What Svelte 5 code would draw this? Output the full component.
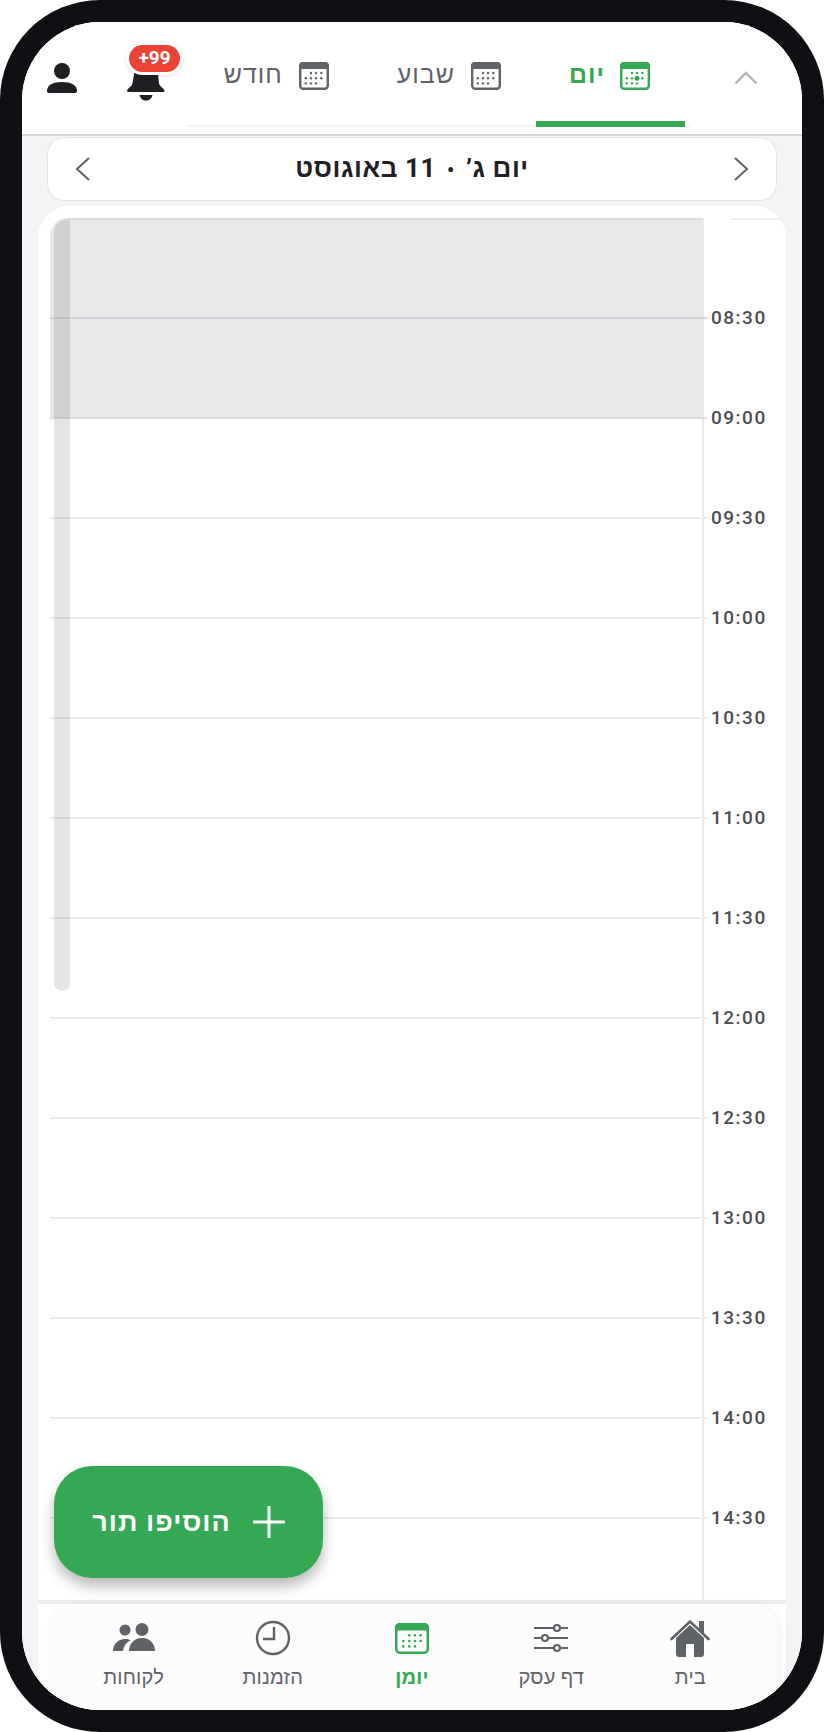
<script>
  const times = ['08:30','09:00','09:30','10:00','10:30','11:00','11:30','12:00','12:30','13:00','13:30','14:00','14:30'];
  const tabs = [
    { label: 'יום', active: true },
    { label: 'שבוע', active: false },
    { label: 'חודש', active: false }
  ];
  const calDots = [
    [12, 11], [17, 11], [22.3, 11],
    [6.8, 16.3], [12, 16.3], [17, 16.3], [22.3, 16.3],
    [6.8, 21.4], [12, 21.4], [17, 21.4]
  ];
  const navDots = [
    [14.3, 12.3], [20, 12.3], [25.7, 12.3],
    [8.3, 18], [14.3, 18], [20, 18], [25.7, 18],
    [8.3, 23.4], [14.3, 23.4], [20, 23.4]
  ];
</script>

{#snippet calendar(color, focus)}
  <svg class="cal" viewBox="0 0 30 28" width="30" height="28" aria-hidden="true">
    <rect x="1.200" y="1.200" width="27.600" height="25.600" rx="3" fill="#fff" stroke={color} stroke-width="2.400" />
    <path d="M0 7V4a4 4 0 0 1 4-4h22a4 4 0 0 1 4 4v3z" fill={color} />
    {#each calDots as [x, y]}
      <circle cx={x} cy={y} r="1.200" fill={color} />
    {/each}
    {#if focus}
      <circle cx="17" cy="16.300" r="2.500" fill={color} />
    {/if}
  </svg>
{/snippet}

<div class="frame">
  <div class="screen" dir="rtl">
    <header class="header">
      <button class="collapse" aria-label="collapse">
        <svg viewBox="0 0 24 14" width="24" height="14"><path d="M1.500 12.500 12 2l10.500 10.500" fill="none" stroke="#b4b4b6" stroke-width="2.400" /></svg>
      </button>
      <nav class="tabs">
        {#each tabs as tab}
          <div class="tab" class:active={tab.active}>
            {@render calendar(tab.active ? '#34a853' : '#5f6368', tab.active)}
            <span>{tab.label}</span>
          </div>
        {/each}
      </nav>
      <div class="bell">
        <svg viewBox="0 0 38 40" width="38" height="40" aria-hidden="true">
          <path d="M12 2h14c3 0 4 3 4.500 6l1.500 14c.3 3 3 4 5 6.500.8 1.200.3 2.500-1.200 2.500H1.700C.2 31-.3 29.700.5 28.500c2-2.500 4.700-3.500 5-6.500L8 8c.5-3 1-6 4-6z" fill="#1f2024" />
          <path d="M12.500 34h13c-.6 3.500-3.200 5.500-6.500 5.500s-5.900-2-6.500-5.500z" fill="#1f2024" />
        </svg>
        <span class="badge" dir="ltr">+99</span>
      </div>
      <div class="person">
        <svg viewBox="0 0 30 30" width="30" height="30" aria-hidden="true">
          <circle cx="15" cy="8" r="8" fill="#1f2024" />
          <path d="M0 28c0-6 6-9 15-9s15 3 15 9c0 1.200-.6 2-2 2H2c-1.400 0-2-.8-2-2z" fill="#1f2024" />
        </svg>
      </div>
    </header>

    <div class="body">
      <div class="datebar">
        <svg viewBox="0 0 16 26" width="16" height="26" aria-hidden="true"><path d="M2 2l12 11L2 24" fill="none" stroke="#5f6368" stroke-width="2" /></svg>
        <h1>יום ג’<span class="dot">•</span>11 באוגוסט</h1>
        <svg viewBox="0 0 16 26" width="16" height="26" aria-hidden="true"><path d="M14 2L2 13l12 11" fill="none" stroke="#5f6368" stroke-width="2" /></svg>
      </div>

      <section class="card">
        <div class="sheet">
          <div class="times">
            {#each times as t}
              <div class="time">{t}</div>
            {/each}
          </div>
          <div class="grid">
            {#each times as t, i}
              <div class="row" class:closed={i < 2}></div>
            {/each}
            <div class="scroll"></div>
          </div>
        </div>
      </section>

      <div class="navwrap">
        <nav class="bottom">
          <div class="item">
            <div class="ic">
              <svg viewBox="0 0 40 38" width="40" height="38" aria-hidden="true">
                <path d="M6 19 20 6l14 13v16a3 3 0 0 1-3 3h-7V25h-8v13H9a3 3 0 0 1-3-3z" fill="#5f6368" />
                <path d="M1.500 20 20 2.500 38.500 20" fill="none" stroke="#5f6368" stroke-width="2.600" stroke-linecap="round" />
                <path d="M29 2h5v13l-5-5z" fill="#5f6368" />
              </svg>
            </div>
            <span>בית</span>
          </div>
          <div class="item">
            <div class="ic">
              <svg viewBox="0 0 34 30" width="34" height="30" aria-hidden="true">
                <g stroke="#5f6368" stroke-width="2.200" fill="#fcfcfc">
                  <path d="M0 5h34M0 15h34M0 25h34" />
                  <circle cx="23" cy="5" r="3" />
                  <circle cx="11" cy="15" r="3" />
                  <circle cx="23" cy="25" r="3" />
                </g>
              </svg>
            </div>
            <span>דף עסק</span>
          </div>
          <div class="item active">
            <div class="ic">
              <svg viewBox="0 0 34 31" width="34" height="31" aria-hidden="true">
                <rect x="1.250" y="1.250" width="31.500" height="28.500" rx="3.500" fill="#fff" stroke="#34a853" stroke-width="2.500" />
                <path d="M0 7.500V4.500a4.500 4.500 0 0 1 4.500-4.500h25a4.500 4.500 0 0 1 4.500 4.500v3z" fill="#34a853" />
                {#each navDots as [x, y]}
                  <circle cx={x} cy={y} r="1.300" fill="#34a853" />
                {/each}
              </svg>
            </div>
            <span>יומן</span>
          </div>
          <div class="item">
            <div class="ic">
              <svg viewBox="0 0 36 36" width="36" height="36" aria-hidden="true">
                <circle cx="18" cy="18" r="16" fill="none" stroke="#5f6368" stroke-width="2.400" />
                <path d="M19 7v12H8" fill="none" stroke="#5f6368" stroke-width="2.400" />
              </svg>
            </div>
            <span>הזמנות</span>
          </div>
          <div class="item">
            <div class="ic">
              <svg viewBox="0 0 42 30" width="42" height="30" aria-hidden="true">
                <circle cx="12" cy="7" r="5.500" fill="#5f6368" />
                <circle cx="29" cy="6.500" r="6.500" fill="#5f6368" />
                <path d="M0 28c0-7 5-12 12-12 2 0 4 .4 5.500 1.200C13 19.500 10.500 23.500 10 28z" fill="#5f6368" />
                <path d="M16 28c0-7 5-13 13-13s13 6 13 13z" fill="#5f6368" />
              </svg>
            </div>
            <span>לקוחות</span>
          </div>
        </nav>
      </div>

      <button class="fab">
        <svg viewBox="0 0 32 32" width="32" height="32" aria-hidden="true"><path d="M16 1v30M1 16h30" stroke="#fff" stroke-width="3" stroke-linecap="round" /></svg>
        <span>הוסיפו תור</span>
      </button>
    </div>
  </div>
</div>

<style>
  :global(body) {
    margin: 0;
    background: #fff;
  }
  .frame {
    width: 824px;
    height: 1732px;
    box-sizing: border-box;
    padding: 22px;
    background: #0f1014;
    border-radius: 100px;
    font-family: Roboto, "Noto Sans", sans-serif;
  }
  .screen {
    height: 1688px;
    border-radius: 78px;
    overflow: hidden;
    background: #fff;
    display: flex;
    flex-direction: column;
  }
  button {
    border: 0;
    background: none;
    padding: 0;
    font: inherit;
  }

  .header {
    flex: none;
    height: 112px;
    box-sizing: content-box;
    border-bottom: 2px solid #d6d7db;
    display: flex;
    background: #fff;
  }
  .collapse {
    flex: none;
    width: 112px;
    height: 106px;
    display: flex;
    align-items: flex-start;
    justify-content: center;
    padding-top: 49px;
    box-sizing: border-box;
  }
  .collapse svg {
    display: block;
  }
  .tabs {
    flex: none;
    width: 504px;
    height: 105px;
    box-sizing: border-box;
    border-bottom: 2px solid #f3f3f4;
    padding-inline-start: 5px;
    display: flex;
    justify-content: flex-start;
  }
  .tab {
    flex: none;
    height: 105px;
    box-sizing: border-box;
    padding: 40px 35px 0 33px;
    display: flex;
    align-items: flex-start;
    gap: 16px;
    color: #5f6368;
    font-size: 25px;
    line-height: 26px;
    letter-spacing: 1px;
  }
  .tab.active {
    width: 149px;
    padding-inline: 35px 0;
    gap: 15px;
    color: #34a853;
    font-weight: 700;
    border-bottom: 6px solid #34a853;
  }
  .bell {
    flex: none;
    width: 80px;
    position: relative;
    display: flex;
    justify-content: center;
    padding-top: 39px;
    box-sizing: border-box;
  }
  .bell svg {
    display: block;
  }
  .badge {
    position: absolute;
    top: 23px;
    left: 23px;
    width: 51px;
    height: 27px;
    box-sizing: border-box;
    border-radius: 14px;
    background: #ea4335;
    box-shadow: 0 0 0 3px #fff, 0 1px 4px 3px rgba(0, 0, 0, 0.12);
    color: #fff;
    font-size: 19px;
    font-weight: 700;
    line-height: 26px;
    text-align: center;
  }
  .person {
    flex: none;
    width: 84px;
    display: flex;
    justify-content: center;
    padding-top: 41px;
    padding-left: 0;
    padding-right: 4px;
    box-sizing: border-box;
  }
  .person svg,
  .cal {
    display: block;
  }

  .body {
    flex: 1;
    min-height: 0;
    position: relative;
    background: #f2f3f5;
    padding: 1px 16px 0;
    display: flex;
    flex-direction: column;
  }
  .datebar {
    flex: none;
    height: 64px;
    box-sizing: border-box;
    margin: 0 9px;
    padding: 0 27px;
    border: 1px solid #e3e4e7;
    border-radius: 18px;
    background: #fff;
    display: flex;
    align-items: center;
    justify-content: space-between;
  }
  h1 {
    margin: 0;
    color: #1f2024;
    font-size: 26px;
    line-height: 30px;
    font-weight: 700;
    letter-spacing: 0.6px;
  }
  .dot {
    margin: 0 11px;
    font-size: 20px;
  }

  .card {
    flex: 1;
    min-height: 0;
    margin-top: 5px;
    background: #fff;
    border-radius: 32px 32px 0 0;
    padding: 12px 0 0 12px;
    overflow: hidden;
  }
  .sheet {
    height: 100%;
    display: flex;
    overflow: hidden;
  }
  .times {
    flex: none;
    width: 82px;
    box-sizing: border-box;
  }
  .times::before {
    content: "";
    display: block;
    height: 2px;
    margin-left: 26px;
    margin-bottom: 48px;
    background: #f0f0f1;
  }
  .time {
    height: 100px;
    line-height: 100px;
    direction: ltr;
    text-align: left;
    padding-left: 7px;
    color: #4c4d50;
    font-size: 19px;
    font-weight: 500;
    letter-spacing: 1.500px;
  }
  .grid {
    flex: 1;
    position: relative;
    border-right: 2px solid #e9e9ea;
    border-top: 2px solid #dcdddf;
    border-top-left-radius: 18px;
    min-width: 0;
  }
  .row {
    height: 100px;
    box-sizing: border-box;
    margin-right: -5px;
    border-bottom: 2px solid #ececed;
  }
  .row:first-child {
    height: 99px;
    border-top-left-radius: 16px;
  }
  .row.closed {
    background: linear-gradient(#e7e8ea, #e7e8ea) left top / calc(100% - 5px) 100% no-repeat;
    border-bottom-color: #d5d6d9;
  }
  .row.closed:nth-child(2) {
    border-bottom-color: #dddee0;
  }
  .scroll {
    position: absolute;
    top: 0;
    left: 4px;
    width: 16px;
    height: 771px;
    border-radius: 12px 0 8px 8px;
    background: rgba(0, 0, 0, 0.1);
  }

  .navwrap {
    flex: none;
    height: 110px;
    box-sizing: border-box;
    background: #fff;
    border-top: 4px solid #ededee;
    padding: 0 9px 8px;
  }
  .bottom {
    height: 98px;
    box-sizing: border-box;
    border-radius: 26px 26px 0 0;
    background: #fcfcfc;
    box-shadow: 5px -1px 10px rgba(0, 0, 0, 0.04);
    padding: 0 17px;
    display: grid;
    grid-template-columns: repeat(5, 1fr);
  }
  .item {
    height: 98px;
    color: #5f6368;
    font-size: 20px;
    line-height: 24px;
    letter-spacing: 0.2px;
    display: flex;
    flex-direction: column;
    align-items: center;
    padding-top: 15px;
    box-sizing: border-box;
    gap: 8px;
  }
  .ic {
    height: 38px;
    display: flex;
    align-items: center;
    justify-content: center;
  }
  .ic svg {
    display: block;
  }
  .item.active {
    color: #34a853;
    font-weight: 700;
  }

  .fab {
    position: absolute;
    left: 32px;
    top: 1330px;
    width: 269px;
    height: 112px;
    border-radius: 38px;
    background: #34a853;
    box-shadow: 0 8px 14px rgba(0, 0, 0, 0.28);
    display: flex;
    align-items: center;
    justify-content: center;
    gap: 22px;
    color: #fff;
    font-size: 27px;
    font-weight: 700;
    letter-spacing: 1px;
  }
  .fab svg {
    display: block;
  }
</style>
